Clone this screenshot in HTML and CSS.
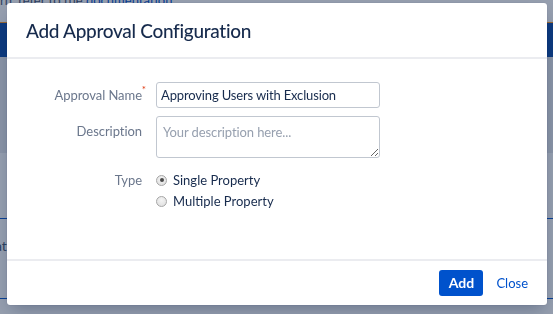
FILE: index.html
```html
<!DOCTYPE html>
<html lang="en">
<head>
<meta charset="utf-8">
<title>Add Approval Configuration</title>
<link rel="stylesheet" href="styles.css">
</head>
<body>
  <div class="page">
    <p class="topnote">rn, refer to the <a href="#">documentation</a>.</p>
    <div class="appbar"></div>
    <div class="panel"></div>
    <div class="content">
      <div class="rule"></div>
      <p class="row-text">Configuration format</p>
      <div class="rule rule-2"></div>
    </div>
  </div>

  <div class="blanket"></div>

  <section class="dialog" role="dialog" aria-labelledby="dlg-title">
    <header class="dialog-header">
      <h2 id="dlg-title" class="dialog-title">Add Approval Configuration</h2>
    </header>
    <div class="dialog-body">
      <form class="form">
        <label class="label label-req" for="name">Approval Name<span class="req">*</span></label>
        <input id="name" class="text-field" type="text" value="Approving Users with Exclusion">

        <label class="label label-top" for="desc">Description</label>
        <textarea id="desc" class="text-area" placeholder="Your description here..."></textarea>

        <span class="label label-type">Type</span>
        <div class="radios">
          <label class="radio-row"><input class="radio" type="radio" name="type" checked> Single Property</label>
          <label class="radio-row"><input class="radio" type="radio" name="type"> Multiple Property</label>
        </div>
      </form>
    </div>
    <footer class="dialog-footer">
      <button class="btn-primary" type="button">Add</button>
      <a class="btn-link" href="#">Close</a>
    </footer>
  </section>
</body>
</html>
```

FILE: styles.css
```css
* { box-sizing: border-box; }

html, body {
  margin: 0;
  padding: 0;
  width: 553px;
  height: 314px;
  overflow: hidden;
  background: #ffffff;
  font-family: Lato, "Noto Sans", sans-serif;
  font-size: 13px;
  color: #172b4d;
}

.page {
  width: 553px;
}

.topnote {
  margin: -10px 0 0 0;
  height: 32px;
  line-height: 20px;
  white-space: nowrap;
  color: #42526e;
  font-size: 13px;
}
.topnote a { color: #0052cc; text-decoration: none; }

.appbar {
  height: 35px;
  background: #0747a6;
  border-top: 1px solid #ff991f;
}

.panel {
  height: 96px;
  background: #e9ebee;
}

.content {
  padding-top: 65px;
}
.rule {
  height: 1px;
  background: #0052cc;
}
.row-text {
  margin: 0;
  padding-top: 17px;
  height: 79px;
  line-height: 20px;
  text-indent: -122px;
  white-space: nowrap;
  color: #42526e;
  font-size: 14px;
}

.blanket {
  position: fixed;
  inset: 0;
  background: rgba(23, 43, 77, 0.45);
}

.dialog {
  position: absolute;
  left: 7px;
  top: 3px;
  width: 540px;
  height: 302px;
  background: #ffffff;
  border-radius: 3px;
  box-shadow: 0 0 1px rgba(9, 30, 66, 0.31), 0 8px 16px -4px rgba(9, 30, 66, 0.3);
  display: flex;
  flex-direction: column;
}

.dialog-header {
  height: 56px;
  padding: 0 19px;
  display: flex;
  align-items: center;
  border-bottom: 2px solid #ebecf0;
}
.dialog-title {
  margin: 0;
  font-size: 19px;
  font-weight: 500;
  letter-spacing: -0.3px;
  color: #172b4d;
}

.dialog-body {
  height: 200px;
  padding: 23px 20px 0;
}

.form {
  display: grid;
  grid-template-columns: 115px 224px;
  column-gap: 14px;
  row-gap: 8px;
  align-items: start;
}

.label {
  text-align: right;
  color: #6b778c;
  font-size: 13px;
  letter-spacing: -0.05px;
  line-height: 26px;
  white-space: nowrap;
}
.label-req { position: relative; }
.req {
  position: absolute;
  right: -4px;
  top: -3px;
  color: #de350b;
  font-size: 10px;
  line-height: 20px;
}
.label-top {
  line-height: 20px;
  padding-top: 5px;
}
.label-type {
  line-height: 20px;
  margin-top: 4px;
}

.text-field {
  width: 224px;
  height: 26px;
  border: 1px solid #c1c7d0;
  border-radius: 3px;
  padding: 0 4px;
  font: inherit;
  font-size: 13px;
  letter-spacing: -0.15px;
  color: #172b4d;
  background: #fff;
  outline: none;
}

.text-area {
  width: 224px;
  height: 42px;
  border: 1px solid #c1c7d0;
  border-radius: 3px;
  padding: 5px 6px;
  font: inherit;
  font-size: 13px;
  letter-spacing: -0.1px;
  line-height: 20px;
  color: #172b4d;
  background: #fff;
  resize: both;
  outline: none;
}
.text-area::placeholder { color: #97a0af; }

.radios {
  margin-top: 4px;
  display: flex;
  flex-direction: column;
  gap: 1px;
}
.radio-row {
  display: flex;
  align-items: center;
  gap: 6px;
  line-height: 20px;
  color: #172b4d;
  font-size: 13px;
}
.radio {
  appearance: none;
  -webkit-appearance: none;
  margin: 0;
  width: 11px;
  height: 11px;
  border-radius: 50%;
  border: 1px solid #a6a6a6;
  background: radial-gradient(circle at 50% 35%, #f4f4f4, #dcdcdc);
  position: relative;
  flex: none;
}
.radio:checked::after {
  content: "";
  position: absolute;
  left: 2.5px;
  top: 2.5px;
  width: 4px;
  height: 4px;
  border-radius: 50%;
  background: #4a4a4a;
}

.dialog-footer {
  height: 46px;
  border-top: 2px solid #ebecf0;
  display: flex;
  align-items: center;
  justify-content: flex-end;
  gap: 13px;
  padding: 0 19px 0 0;
}
.btn-primary {
  height: 26px;
  width: 44px;
  padding: 0;
  border: 0;
  border-radius: 3px;
  background: #0052cc;
  color: #fff;
  font: inherit;
  font-size: 14px;
  font-weight: 700;
  line-height: 26px;
}
.btn-link {
  color: #0052cc;
  text-decoration: none;
  font-size: 13px;
  line-height: 26px;
}
```
